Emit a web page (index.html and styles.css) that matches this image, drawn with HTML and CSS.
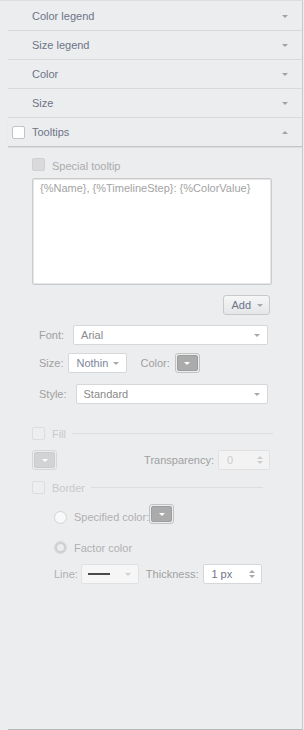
FILE: index.html
```html
<!DOCTYPE html>
<html lang="en">
<head>
  <meta charset="UTF-8" />
  <title>Tooltip settings</title>
  <link rel="stylesheet" href="styles.css">
</head>
<body>
  <div class="panel">
    <div class="section first"><span class="title">Color legend</span><span class="caret"></span></div>
    <div class="section"><span class="title">Size legend</span><span class="caret"></span></div>
    <div class="section"><span class="title">Color</span><span class="caret"></span></div>
    <div class="section"><span class="title">Size</span><span class="caret"></span></div>
    <div class="section open">
      <span class="check white"></span>
      <span class="title">Tooltips</span>
      <span class="caret up"></span>
    </div>

    <div class="body">
      <div class="row special">
        <span class="check gray"></span>
        <span class="label muted">Special tooltip</span>
      </div>

      <div class="formula">{%Name}, {%TimelineStep}: {%ColorValue}</div>

      <div class="row add-row">
        <div class="button">Add <span class="caret small"></span></div>
      </div>

      <div class="row field font-row">
        <span class="label">Font:</span>
        <div class="select grow">Arial <span class="caret small"></span></div>
      </div>

      <div class="row field size-row">
        <span class="label">Size:</span>
        <div class="select size-select">Nothin <span class="caret small"></span></div>
        <span class="label color-label">Color:</span>
        <div class="color-btn"><span class="swatch"><span class="caret white-caret"></span></span></div>
      </div>

      <div class="row field style-row">
        <span class="label">Style:</span>
        <div class="select grow">Standard <span class="caret small"></span></div>
      </div>

      <div class="row group fill-row">
        <span class="check faint"></span>
        <span class="label faint-text">Fill</span>
        <span class="rule"></span>
      </div>

      <div class="row fill-opts">
        <div class="color-btn disabled"><span class="swatch"><span class="caret white-caret"></span></span></div>
        <span class="label transp">Transparency:</span>
        <div class="spinner faded"><span>0</span><span class="arrows"><i class="up"></i><i class="down"></i></span></div>
      </div>

      <div class="row group border-row">
        <span class="check faint"></span>
        <span class="label faint-text">Border</span>
        <span class="rule short"></span>
      </div>

      <div class="row radio-row specified">
        <span class="radio"></span>
        <span class="label light">Specified color:</span>
        <div class="color-btn"><span class="swatch"><span class="caret white-caret"></span></span></div>
      </div>

      <div class="row radio-row factor">
        <span class="radio checked"></span>
        <span class="label light">Factor color</span>
      </div>

      <div class="row line-row">
        <span class="label light">Line:</span>
        <div class="select line-select"><span class="sample"></span><span class="caret small faint-caret"></span></div>
        <span class="label thick">Thickness:</span>
        <div class="spinner"><span>1 px</span><span class="arrows"><i class="up"></i><i class="down"></i></span></div>
      </div>
    </div>

    <div class="footer"></div>
  </div>
</body>
</html>
```

FILE: styles.css
```css
* {
  margin: 0;
  padding: 0;
  box-sizing: border-box;
}
html, body {
  background: #ecedef;
}
body {
  width: 304px;
  height: 730px;
  overflow: hidden;
  font-family: "Liberation Sans", Arial, sans-serif;
  font-size: 11px;
  color: #a0a0a0;
}
.panel {
  width: 303px;
  height: 730px;
  border-top: 1px solid #dcdde0;
  border-right: 1px solid #c9cacd;
  padding-top: 1px;
  display: flex;
  flex-direction: column;
}
/* collapsible headers */
.section {
  height: 29px;
  margin-left: 8px;
  padding: 0 14px 0 24px;
  border-bottom: 1px solid #d8d9dc;
  display: flex;
  align-items: center;
}
.section .title {
  flex: 1;
  color: #6d7487;
}
.section.open {
  padding-left: 4px;
  border-bottom-color: #c4c5c8;
  box-shadow: 0 1px 1px rgba(0, 0, 0, 0.06);
}
.section.open .check {
  margin-right: 7px;
}
.caret {
  display: inline-block;
  width: 0;
  height: 0;
  border-left: 3px solid transparent;
  border-right: 3px solid transparent;
  border-top: 3px solid #a2a2a2;
}
.caret.up {
  border-top: none;
  border-bottom: 3px solid #a2a2a2;
}
.caret.small {
  border-top-color: #a8a8a8;
}
.caret.white-caret {
  border-top: 3px solid #fff;
}
.caret.faint-caret {
  border-top-color: #cfcfcf;
}
/* checkboxes and radios */
.check {
  width: 13px;
  height: 13px;
  border-radius: 2px;
  border: 1px solid #c2c3c6;
  flex: none;
}
.check.white {
  background: #fff;
}
.check.gray {
  background: #dadadc;
  border-color: #cfd0d2;
}
.check.faint {
  background: #eeeef0;
  border-color: #dcdde0;
}
.radio {
  width: 13px;
  height: 13px;
  border-radius: 50%;
  border: 1px solid #d3d4d6;
  background: #f9f9f9;
  flex: none;
  display: flex;
  align-items: center;
  justify-content: center;
}
.radio.checked::after {
  content: '';
  width: 7px;
  height: 7px;
  border-radius: 50%;
  border: 2px solid #cfcfd1;
  background: #ececec;
}
/* body of the open section */
.body {
  padding: 0 32px;
}
.row {
  display: flex;
  align-items: center;
}
.label {
  white-space: nowrap;
}
.muted {
  color: #ababab;
}
.faint-text {
  color: #c9c9c9;
}
.light {
  color: #b0b0b0;
}
.special {
  margin-top: 11px;
  height: 13px;
}
.special .label {
  margin-left: 7px;
  padding-top: 2px;
}
.formula {
  margin-top: 7px;
  width: 240px;
  height: 107px;
  background: #fff;
  border: 1px solid #cacbcd;
  box-shadow: inset 0 0 0 1px #e6e6e6;
  border-radius: 2px;
  padding: 3px 7px;
  color: #a3a3a3;
}
.add-row {
  margin-top: 10px;
  justify-content: flex-end;
}
.button {
  width: 47px;
  height: 20px;
  border: 1px solid #c8c9cb;
  border-radius: 3px;
  background: linear-gradient(#f6f6f7, #e5e6e8);
  color: #6d7487;
  display: flex;
  align-items: center;
  justify-content: flex-end;
  padding-right: 6px;
  gap: 6px;
}
.field {
  height: 20px;
  padding-left: 7px;
}
.font-row {
  margin-top: 10px;
}
.size-row {
  margin-top: 8px;
}
.style-row {
  margin-top: 11px;
}
.select {
  height: 20px;
  background: #fff;
  border: 1px solid #d6d7d9;
  border-radius: 2px;
  color: #8a8a8a;
  display: flex;
  align-items: center;
  justify-content: space-between;
  padding: 0 7px 0 7px;
}
.font-row .select,
.style-row .select {
  margin-left: 9px;
  margin-right: 2px;
}
.grow {
  flex: 1;
}
.size-select {
  width: 59px;
  margin-left: 5px;
  color: #7d8699;
}
.color-label {
  margin-left: 13px;
  margin-right: 5px;
}
.color-btn {
  width: 25px;
  height: 20px;
  border: 1px solid #c2c3c5;
  border-radius: 3px;
  padding: 1px;
  flex: none;
}
.swatch {
  display: flex;
  align-items: center;
  justify-content: center;
  width: 100%;
  height: 100%;
  background: #ababab;
  border: 1px solid #9e9e9e;
  border-radius: 2px;
}
.color-btn.disabled {
  border-color: #d6d7d9;
}
.color-btn.disabled .swatch {
  background: #d2d3d5;
  border-color: #cacbcd;
}
/* group headers */
.group {
  height: 13px;
}
.group .label {
  margin-left: 7px;
}
.rule {
  flex: 1;
  height: 1px;
  background: #dcdde0;
  margin-left: 6px;
  margin-right: -3px;
}
.rule.short {
  margin-right: 7px;
}
.fill-row {
  margin-top: 23px;
}
.fill-opts {
  margin-top: 10px;
  height: 20px;
}
.transp {
  margin-left: auto;
  margin-right: 4px;
}
.spinner {
  height: 20px;
  width: 52px;
  background: #fff;
  border: 1px solid #d6d7d9;
  border-radius: 2px;
  display: flex;
  align-items: center;
  justify-content: space-between;
  padding: 0 6px 0 7px;
  color: #6d7487;
}
.spinner.faded {
  background: #f3f3f4;
  border-color: #e0e1e3;
  color: #cbcbcb;
  padding-left: 8px;
}
.arrows {
  display: flex;
  flex-direction: column;
  gap: 2px;
}
.arrows i {
  display: block;
  width: 0;
  height: 0;
  border-left: 3px solid transparent;
  border-right: 3px solid transparent;
}
.arrows .up {
  border-bottom: 3px solid #a9a9a9;
}
.arrows .down {
  border-top: 3px solid #a9a9a9;
}
.faded .arrows .up {
  border-bottom-color: #cdcdcd;
}
.faded .arrows .down {
  border-top-color: #cdcdcd;
}
.border-row {
  margin-top: 11px;
}
.radio-row {
  padding-left: 22px;
}
.radio-row .label {
  margin-left: 7px;
}
.specified {
  margin-top: 10px;
  height: 20px;
  align-items: flex-end;
}
.specified .label {
  line-height: 13px;
}
.factor {
  margin-top: 17px;
  height: 13px;
}
.line-row {
  margin-top: 10px;
  height: 20px;
  padding-left: 22px;
}
.line-select {
  width: 58px;
  margin-left: 3px;
  background: #f6f6f7;
  border-color: #e0e1e3;
  padding-left: 6px;
}
.sample {
  width: 22px;
  height: 2px;
  background: #4a4a4a;
}
.thick {
  margin-left: 7px;
  margin-right: 5px;
}
.line-row .spinner {
  width: 59px;
}
.footer {
  margin-top: auto;
  margin-left: 8px;
  height: 1px;
  background: #b7b8bb;
}
```
